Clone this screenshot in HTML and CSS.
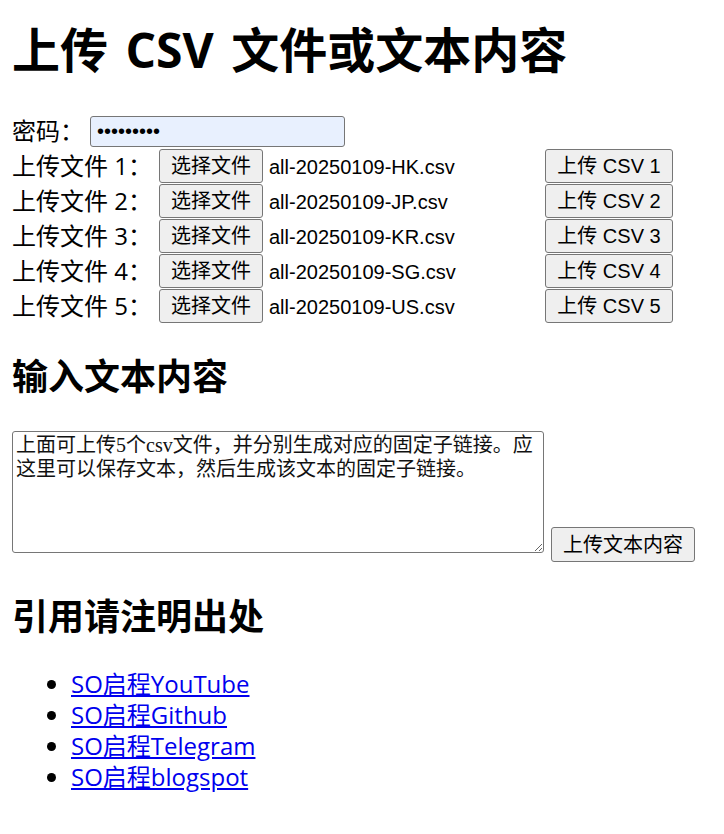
FILE: index.html
```html
<!DOCTYPE html>
<html lang="zh-CN">
<head>
<meta charset="utf-8">
<title>上传 CSV 文件或文本内容</title>
<link rel="stylesheet" href="styles.css">
</head>
<body>
<h1 class="title">上传 CSV 文件或文本内容</h1>

<div class="pw-row">
  <label class="pw-label" for="pw">密码：</label>
  <input class="pw-input" id="pw" type="password" value="123456789">
</div>

<div class="file-rows">
  <div class="file-row">
    <span class="file-label">上传文件 1：</span>
    <span class="file-picker"><button class="btn">选择文件</button><span class="file-name">all-20250109-HK.csv</span></span>
    <button class="btn btn-upload">上传 CSV 1</button>
  </div>
  <div class="file-row">
    <span class="file-label">上传文件 2：</span>
    <span class="file-picker"><button class="btn">选择文件</button><span class="file-name">all-20250109-JP.csv</span></span>
    <button class="btn btn-upload">上传 CSV 2</button>
  </div>
  <div class="file-row">
    <span class="file-label">上传文件 3：</span>
    <span class="file-picker"><button class="btn">选择文件</button><span class="file-name">all-20250109-KR.csv</span></span>
    <button class="btn btn-upload">上传 CSV 3</button>
  </div>
  <div class="file-row">
    <span class="file-label">上传文件 4：</span>
    <span class="file-picker"><button class="btn">选择文件</button><span class="file-name">all-20250109-SG.csv</span></span>
    <button class="btn btn-upload">上传 CSV 4</button>
  </div>
  <div class="file-row">
    <span class="file-label">上传文件 5：</span>
    <span class="file-picker"><button class="btn">选择文件</button><span class="file-name">all-20250109-US.csv</span></span>
    <button class="btn btn-upload">上传 CSV 5</button>
  </div>
</div>

<h2 class="section">输入文本内容</h2>
<div class="text-row">
  <textarea class="text-box">上面可上传5个csv文件，并分别生成对应的固定子链接。应
这里可以保存文本，然后生成该文本的固定子链接。</textarea>
  <button class="btn btn-text">上传文本内容</button>
</div>

<h2 class="section">引用请注明出处</h2>
<ul class="links">
  <li><a href="#">SO启程YouTube</a></li>
  <li><a href="#">SO启程Github</a></li>
  <li><a href="#">SO启程Telegram</a></li>
  <li><a href="#">SO启程blogspot</a></li>
</ul>
</body>
</html>
```

FILE: styles.css
```css
html, body {
  background: #fff;
}

body {
  margin: 0;
  padding: 0 12px;
  font-family: "Open Sans", "Noto Sans CJK SC", sans-serif;
  font-size: 24px;
  color: #000;
}

.title {
  margin: 18px 0 0;
  font-size: 48px;
  line-height: 63px;
  font-weight: 700;
  word-spacing: 5px;
}

.pw-row {
  display: flex;
  align-items: center;
  height: 34px;
  margin-top: 33px;
}

.pw-label {
  width: 78px;
  line-height: 34px;
}

.pw-input {
  box-sizing: border-box;
  width: 255px;
  height: 31px;
  margin: 0;
  padding: 0 6px;
  border: 1px solid #767676;
  border-radius: 3px;
  background: #e8f0fe;
  font-family: "Liberation Sans", sans-serif;
  font-size: 20px;
  color: #000;
}

.file-row {
  display: grid;
  grid-template-columns: 147px 386px auto;
  align-items: center;
  height: 35px;
}

.file-label {
  line-height: 35px;
  white-space: nowrap;
}

.file-picker {
  display: flex;
  align-items: center;
  gap: 6px;
}

.file-name {
  padding-top: 3px;
  font-family: "Liberation Sans", "Noto Sans CJK SC", sans-serif;
  font-size: 20px;
  white-space: nowrap;
}

.btn {
  box-sizing: border-box;
  height: 34px;
  margin: 0;
  padding: 0 11px;
  border: 1px solid #767676;
  border-radius: 3px;
  background: #efefef;
  color: #000;
  font-family: "Liberation Sans", "Noto Sans CJK SC", sans-serif;
  font-size: 20px;
  line-height: 32px;
  white-space: nowrap;
}

.btn-upload {
  width: 128px;
  padding: 0;
}

.section {
  margin: 30px 0;
  font-size: 36px;
  line-height: 47px;
  font-weight: 700;
}

.text-row {
  display: flex;
  align-items: flex-start;
  gap: 7px;
  padding: 1px 0 1px;
}

.text-box {
  box-sizing: border-box;
  width: 532px;
  height: 122px;
  margin: 0;
  padding: 1px 3px 2px;
  border: 1px solid #767676;
  border-radius: 3px;
  font-family: "Liberation Serif", "Noto Sans CJK SC", serif;
  font-size: 20px;
  line-height: 24px;
  color: #111;
  background: #fff;
}

.btn-text {
  height: 35px;
  margin-top: 96px;
}

.links {
  margin: -2px 0 0;
  padding-left: 59px;
  line-height: 31px;
}

.links a {
  color: #0000ee;
  text-decoration: underline;
}
```
